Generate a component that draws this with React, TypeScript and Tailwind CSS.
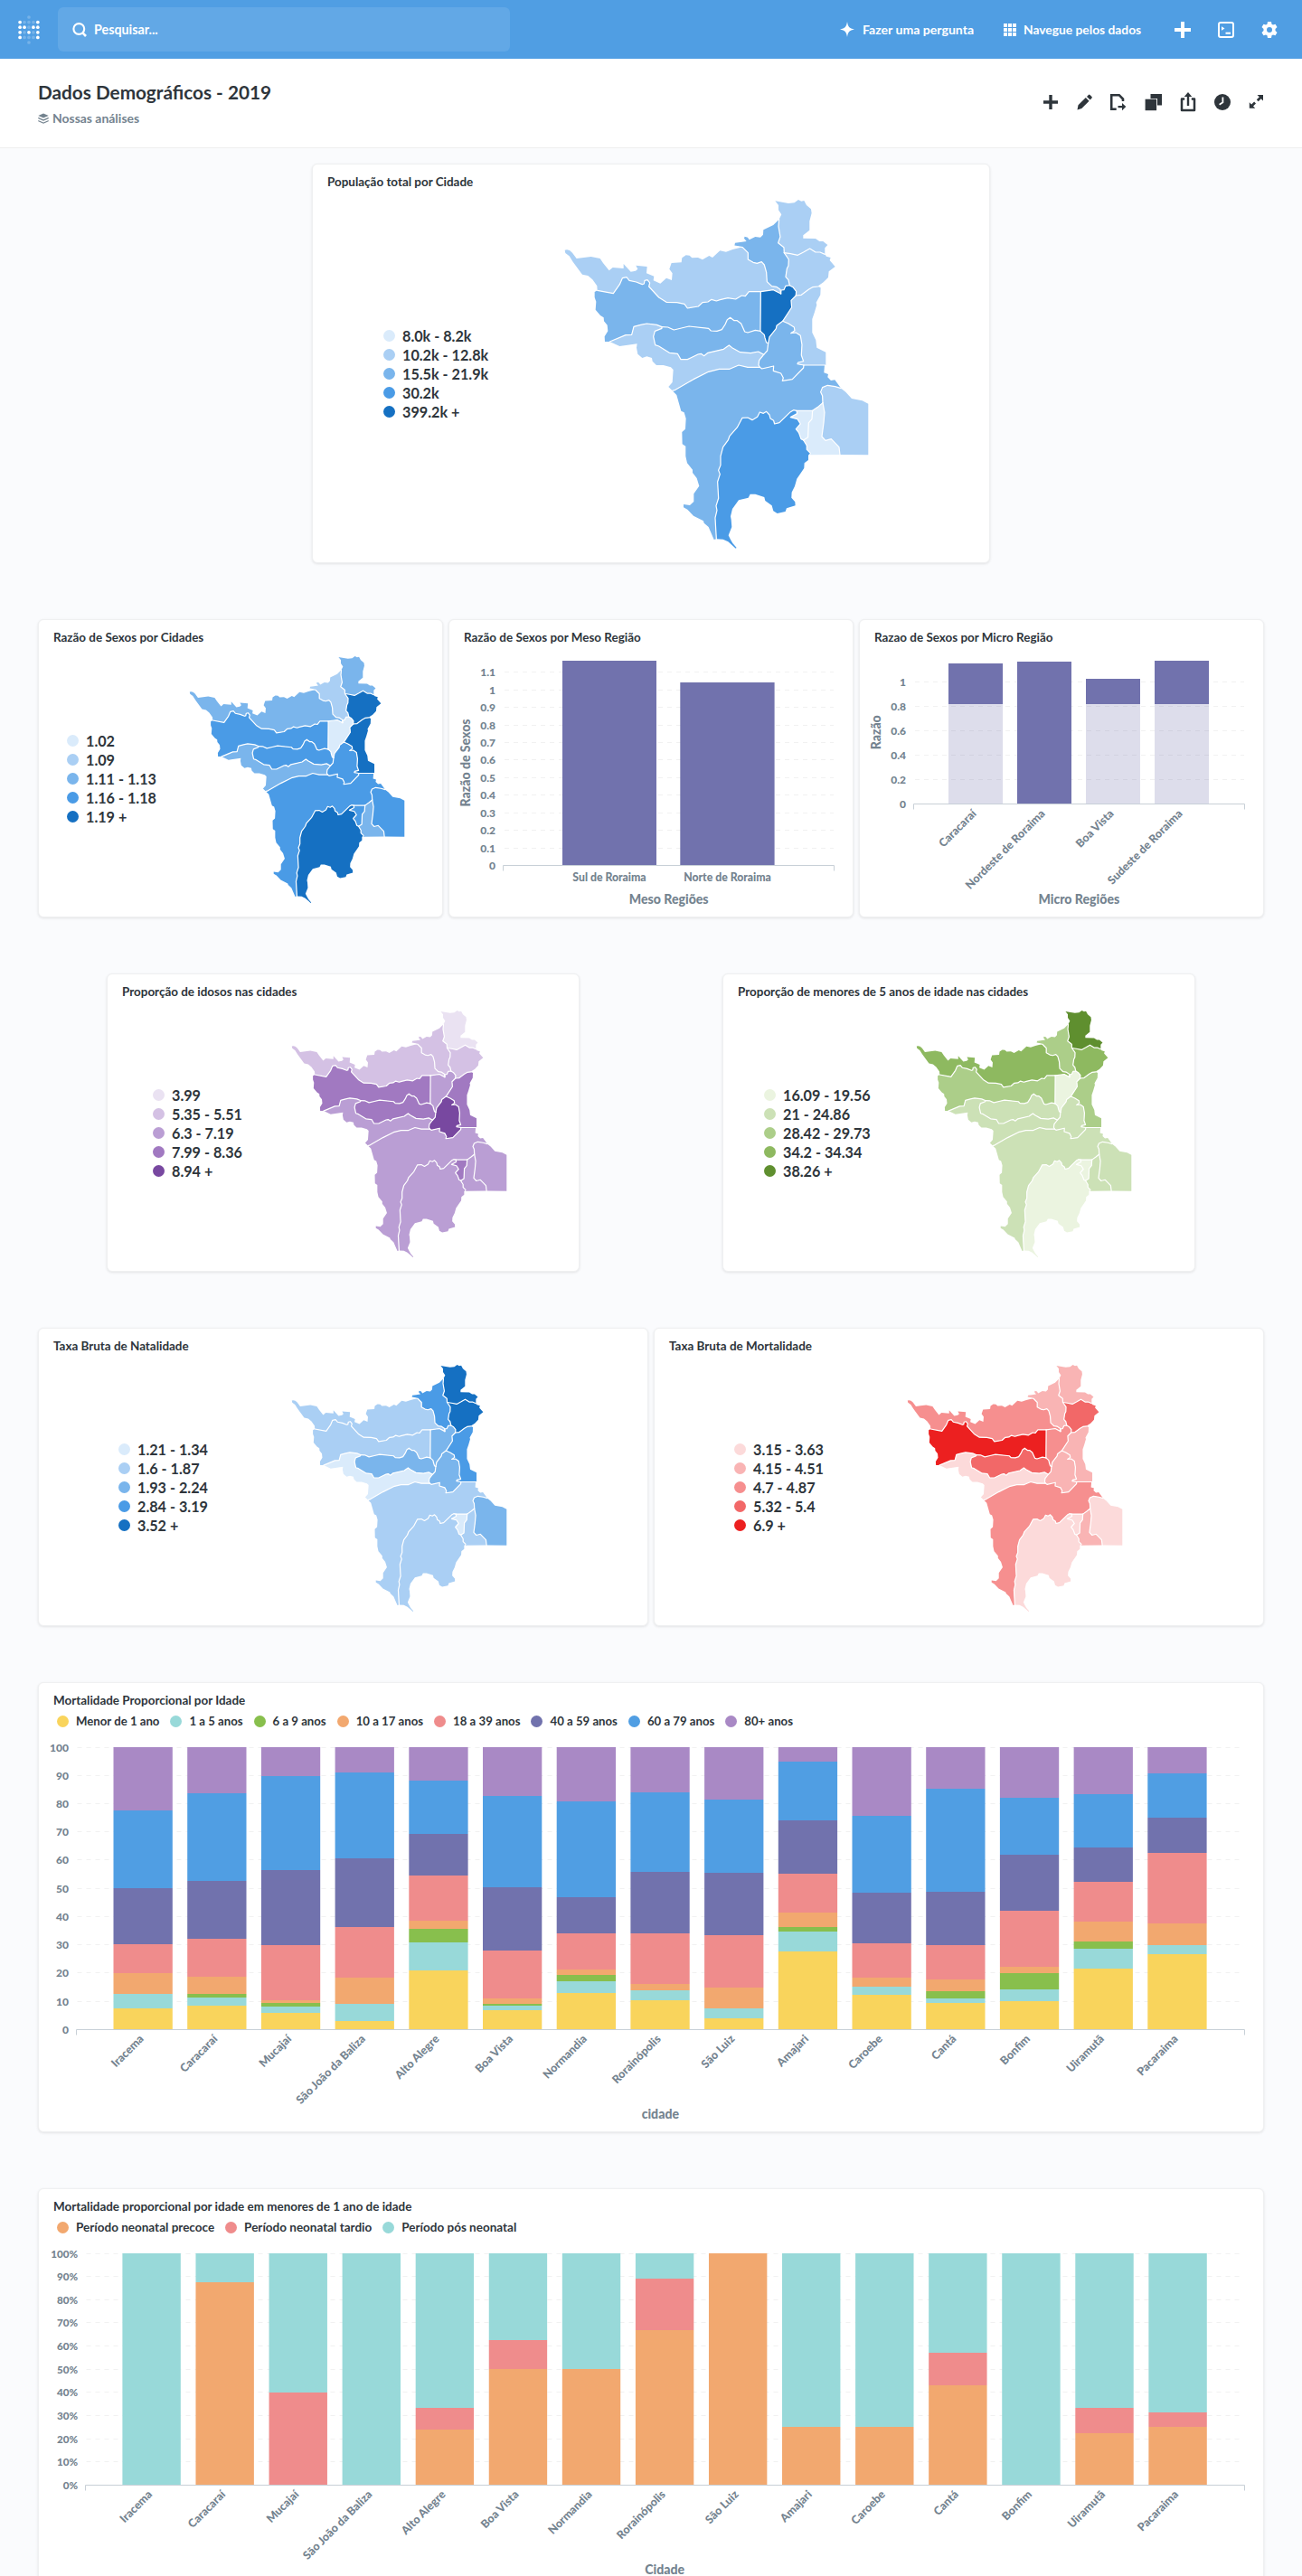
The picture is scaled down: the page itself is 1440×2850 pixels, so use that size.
import React from "react";

type Pt = string;

/* Shared municipal borders, listed once and reused by both neighbours. */
const B = {
  uirNor: "936,245 920,238 905,238 886,226 865,238 846,248 822,243 801,240",
  uirPac: "801,240 800,222 781,207 788,187 782,152 784,129",
  pacAma: "636,217 663,222 681,240 681,262 698,272 711,275 726,270 735,280 742,305 744,336 760,351 775,353 788,362 790,376",
  pacBv: "790,376 791,364 800,363 806,350 819,348",
  pacNor: "819,348 815,330 806,320 810,293 815,283 816,262 801,240",
  norBon: "913,352 895,354 882,362 858,380 840,382",
  norBv: "840,382 841,368 830,354 819,348",
  bonCar: "938,613 866,613",
  bonCan: "866,613 845,609 847,604 865,600 858,580 860,545 855,515 840,505 823,507 836,498 834,487 815,475 796,467",
  bonBv: "796,467 826,421 824,398 840,382",
  bvCan: "796,467 776,482 774,492 752,520 748,540",
  bvMuc: "748,540 742,538 737,522 735,512 722,500",
  bvAlt: "723,369 722,500",
  amaBv: "723,369 750,365 765,363 790,376",
  amaAlt: "723,369 684,369 672,384 660,382 640,394 614,390 588,396 576,400 560,395 548,403 530,405 516,418 480,424 470,410 445,405 410,404 385,388 352,352 355,340 347,330 338,332 336,343 330,345 310,337 287,332 278,321 264,324 255,345 234,375 181,365",
  altMuc: "722,500 705,497 680,505 670,502 658,475 645,465 635,465 622,455 612,462 605,478 594,495 578,500 558,499 550,491 485,484 460,490 435,496 415,487 395,486",
  altIra: "395,486 378,479 345,475 325,479 302,485 295,512 275,513 222,535",
  mucIra: "395,486 395,491 372,500 367,518 373,546 385,550 420,572 447,575 458,594 480,594 515,577 525,575 535,582 548,572 600,560 618,547 628,555 655,570 690,573 715,568 733,578",
  mucCan: "733,578 745,565 748,540",
  iraCan: "733,578 718,597 716,612 720,620",
  iraCar: "720,620 680,620 650,613 620,626 585,626 550,635 500,660 440,695 430,698",
  canCar: "720,620 727,625 766,616 765,632 790,640 798,655 795,665 828,660 865,622 866,613",
  carCbe: "990,690 970,684 945,680 928,687 922,702 928,715 929,738",
  carSjb: "929,738 915,750 895,764",
  carSlz: "895,764 842,764",
  carRor: "842,764 832,762 822,768 785,804 769,808 766,797 755,790 752,778 742,767 732,773 720,769 712,785 695,795 680,787 662,788 645,820 620,848 615,862 598,885 590,915 590,945 583,962 588,975 580,1000 583,1055 575,1080 578,1095 572,1120 576,1190",
  rorSlz: "842,764 844,774 822,786 845,792 855,808 840,825 850,838 857,858 865,862",
  rorSjb: "865,862 876,880 876,893 888,905",
  slzSjb: "895,764 893,792 882,805 880,852 865,862",
  sjbCbe: "929,738 935,770 932,805 926,850 938,863 957,858 983,885 986,910",
};

const BORDERS = Object.values(B);

const rev = (s: Pt) => s.split(" ").reverse().join(" ");
const ring = (...parts: Pt[]) => parts.join(" ");

const REGIONS: Record<string, string> = {
  uiramuta: ring("784,129 792,113 782,98 782,82 771,68 795,72 815,76 835,74 848,64 858,69 867,67 875,82 890,95 892,108 885,135 885,165 864,182 864,192 905,193 918,202 930,202 945,214 936,224", B.uirNor, B.uirPac),
  pacaraima: ring("784,129 765,148 732,164 731,180 722,189 705,187 685,197 680,189 670,186 668,192 676,202 655,205 638,207", B.pacAma, B.pacBv, B.pacNor, B.uirPac),
  normandia: ring(rev(B.uirNor), "941,252 955,256 952,265 970,286 949,302 947,322 931,338 916,348", B.norBon, B.norBv, B.pacNor),
  bonfim: ring(rev(B.norBon), "913,352 922,356 921,380 907,405 909,413 901,440 894,460 894,505 906,530 909,555 939,570 939,613", B.bonCan, B.bonBv),
  boavista: ring(B.amaBv, B.pacBv, rev(B.norBv), rev(B.bonBv), B.bvCan, B.bvMuc),
  amajari: ring("181,365 180,350 165,329 150,316 131,312 100,270 88,251 75,241 73,231 80,230 89,232 98,240 112,259 160,253 190,259 200,274 220,299 232,289 268,292 268,277 292,303 308,300 315,294 309,282 346,286 344,308 369,318 367,332 390,342 410,324 428,331 430,308 420,294 427,274 460,272 462,257 475,248 487,249 495,257 515,256 530,263 552,250 563,256 588,233 608,237 630,229 663,221", B.pacAma.replace("636,217 ", ""), rev(B.amaBv), B.amaAlt),
  altoalegre: ring(rev(B.amaAlt), B.altMuc, B.altIra, "206,535 205,518 216,500 214,480 203,467 202,455 191,448 175,429 177,402 172,388 172,370"),
  mucajai: ring(rev(B.altMuc), rev(B.bvMuc), rev(B.mucCan), rev(B.mucIra)),
  iracema: ring(rev(B.altIra), B.mucIra, B.iraCan, B.iraCar, "417,685 430,670 433,628 425,620 400,613 377,613 364,600 362,589 345,584 330,589 315,576 311,555 313,542 255,550"),
  canta: ring(rev(B.bvCan), rev(B.bonCan), rev(B.canCar), rev(B.iraCan), B.mucCan),
  caracarai: ring(rev(B.iraCar), B.canCar, "935,613 933,638 947,643 945,653 956,664 969,662", B.carCbe, B.carSjb, B.carSlz, B.carRor, "568,1192 550,1150 535,1137 533,1130 500,1113 480,1092 467,1085 467,1075 488,1078 501,1066 501,1040 519,1014 511,988 497,970 497,960 479,938 474,915 474,882 463,875 462,835 473,825 475,790 469,770 459,765 444,712"),
  rorainopolis: ring(B.carRor, "598,1191 615,1199 630,1212 640,1221 643,1219 630,1204 623,1192 616,1178 627,1150 625,1125 623,1115 629,1090 650,1061 682,1053 688,1041 705,1041 735,1051 738,1063 760,1079 765,1097 778,1105 805,1099 809,1088 838,1079 837,1067 825,1053 826,1035 836,1015 843,990 867,955 868,938 881,928 881,912", rev(B.rorSjb), rev(B.rorSlz)),
  saoluiz: ring(B.slzSjb, rev(B.rorSlz)),
  baliza: ring(B.sjbCbe, "888,911", rev(B.rorSjb), rev(B.slzSjb), rev(B.carSjb)),
  caroebe: ring(B.sjbCbe, "1080,911 1080,741 1060,731 1025,724 1005,702", B.carCbe),
};

const REGION_IDS = [
  "uiramuta", "pacaraima", "normandia", "bonfim", "boavista", "amajari", "altoalegre", "mucajai",
  "iracema", "canta", "caracarai", "rorainopolis", "saoluiz", "baliza", "caroebe",
];

const BLUES = ["#DAEBFB", "#AACFF4", "#7AB5EC", "#4A9BE6", "#1570C2"];
const PURPLES = ["#EAE2F2", "#D4C1E4", "#BA9ED4", "#A179C1", "#7848A0"];
const GREENS = ["#EBF4E0", "#CCE1B6", "#ACCE89", "#8EB960", "#5F8F2F"];
const REDS = ["#FCDADA", "#F9B4B4", "#F68F8F", "#F26868", "#EC2020"];

function RegionMap({ levels, palette, className }: { levels: number[]; palette: string[]; className: string }) {
  return (
    <svg viewBox="74 64 1006 1156" className={`shrink-0 overflow-visible ${className}`}>
      {REGION_IDS.map((id, i) => (
        <polygon key={id} points={REGIONS[id]} fill={palette[levels[i]]} />
      ))}
      {BORDERS.map((points) => (
        <polyline key={points} points={points} fill="none" stroke="#fff" strokeWidth="1.2" strokeLinejoin="round" strokeLinecap="round" vectorEffect="non-scaling-stroke" />
      ))}
    </svg>
  );
}

function Card({ title, className, children }: { title: string; className: string; children: React.ReactNode }) {
  return (
    <section className={`flex shrink-0 flex-col rounded-[6px] border border-[#eff0f1] bg-white shadow-[0_1px_3px_rgba(0,0,0,0.1)] ${className}`}>
      <h2 className="h-10 shrink-0 pt-[11px] pl-4 text-[13.45px] leading-4 font-bold text-[#2e353b]">{title}</h2>
      {children}
    </section>
  );
}

type MapCardProps = {
  title: string;
  card: string;
  legend: string;
  map: string;
  labels: string[];
  palette: string[];
  levels: number[];
};

function MapCard({ title, card, legend, map, labels, palette, levels }: MapCardProps) {
  return (
    <Card title={title} className={card}>
      <div className="flex items-center">
        <ul className={`shrink-0 pb-0.5 ${legend}`}>
          {labels.map((l, i) => (
            <li key={l} className="flex h-[21px] items-center gap-2 text-[16.2px] leading-[21px] font-bold whitespace-nowrap text-[#2e353b]">
              <svg className="size-[13px] shrink-0" viewBox="0 0 13 13"><circle cx="6.5" cy="6.5" r="6.5" fill={palette[i]} /></svg>
              {l}
            </li>
          ))}
        </ul>
        <RegionMap levels={levels} palette={palette} className={map} />
      </div>
    </Card>
  );
}

const SMALL_MAP = "h-[272.7px] w-[237.3px]";

/* ---------- charts ---------- */

const AXIS = "#74838f";

function YTicks({ ticks, x, x1, x2 }: { ticks: [string, number][]; x: number; x1: number; x2: number }) {
  return (
    <>
      {ticks.map(([t, y]) => (
        <g key={t}>
          {Number.parseFloat(t) !== 0 && <line x1={x1 + 1} x2={x2} y1={y} y2={y} stroke="#f1f1f1" strokeDasharray="5 5" />}
          <text x={x} y={y + 4.5} textAnchor="end" fontSize={t.endsWith("%") ? "11.6" : "12"} fontWeight="900" fill={AXIS}>{t}</text>
        </g>
      ))}
    </>
  );
}

function XAxis({ x1, x2, y }: { x1: number; x2: number; y: number }) {
  return <path d={`M${x1} ${y + 6}V${y}H${x2}V${y + 6}`} fill="none" stroke="#c8d0d7" />;
}

function SlantLabel({ x, y, children }: { x: number; y: number; children: string }) {
  return (
    <text transform={`translate(${x} ${y}) rotate(-45)`} textAnchor="end" fontSize="12.5" fontWeight="900" fill={AXIS}>{children}</text>
  );
}

function AxisTitle({ x, y, vertical, children }: { x: number; y: number; vertical?: boolean; children: string }) {
  return (
    <text transform={`translate(${x} ${y})${vertical ? " rotate(-90)" : ""}`} textAnchor="middle" fontSize="14.1" fontWeight="900" fill={AXIS}>{children}</text>
  );
}

function MesoChart() {
  const ticks = Array.from({ length: 12 }, (_, i) => [String(i / 10), Math.round(957 - i * 19.42) + 0.5] as [string, number]);
  return (
    <svg viewBox="497 726 446 288" className="h-[288px] w-[446px]">
      <YTicks ticks={ticks} x={548} x1={557} x2={922} />
      <rect x="622" y="731" width="104" height="226.5" fill="#7172AD" />
      <rect x="752.3" y="755" width="104.3" height="202.5" fill="#7172AD" />
      <XAxis x1={556.5} x2={922.5} y={957.5} />
      <text x="674" y="975" textAnchor="middle" fontSize="12.25" fontWeight="900" fill={AXIS}>Sul de Roraima</text>
      <text x="804.5" y="975" textAnchor="middle" fontSize="12.25" fontWeight="900" fill={AXIS}>Norte de Roraima</text>
      <AxisTitle x={739.7} y={1000}>Meso Regiões</AxisTitle>
      <AxisTitle x={520} y={844} vertical>Razão de Sexos</AxisTitle>
    </svg>
  );
}

function MicroChart() {
  const ticks = [0, 0.2, 0.4, 0.6, 0.8, 1].map((v, i) => [String(v), 889.5 - i * 27] as [string, number]);
  const bars: [string, number, boolean][] = [
    ["Caracaraí", 734, true], ["Nordeste de Roraima", 732, false], ["Boa Vista", 751, true], ["Sudeste de Roraima", 731, true],
  ];
  return (
    <svg viewBox="951 726 446 288" className="h-[288px] w-[446px]">
      <YTicks ticks={ticks} x={1002} x1={1011} x2={1376} />
      {bars.map(([name, top, split], i) => {
        const x = 1049 + i * 76;
        return (
          <g key={name}>
            <rect x={x} y={top} width="60" height={(split ? 779 : 889.5) - top} fill="#7172AD" />
            {split && <rect x={x} y="779" width="60" height="110.5" fill="#7172AD" fillOpacity="0.24" />}
            <SlantLabel x={x + 31.5} y={901}>{name}</SlantLabel>
          </g>
        );
      })}
      <XAxis x1={1010.5} x2={1376.5} y={889.5} />
      <AxisTitle x={1193.3} y={1000}>Micro Regiões</AxisTitle>
      <AxisTitle x={974} y={810.3} vertical>Razão</AxisTitle>
    </svg>
  );
}

const CITIES = ["Iracema", "Caracaraí", "Mucajaí", "São João da Baliza", "Alto Alegre", "Boa Vista", "Normandia", "Rorainópolis", "São Luiz", "Amajari", "Caroebe", "Cantá", "Bonfim", "Uiramutã", "Pacaraima"];

type Series = { name: string; color: string };

const AGES: Series[] = [
  { name: "Menor de 1 ano", color: "#F9D45C" },
  { name: "1 a 5 anos", color: "#98D9D9" },
  { name: "6 a 9 anos", color: "#88BF4D" },
  { name: "10 a 17 anos", color: "#F2A86F" },
  { name: "18 a 39 anos", color: "#EF8C8C" },
  { name: "40 a 59 anos", color: "#7172AD" },
  { name: "60 a 79 anos", color: "#509EE3" },
  { name: "80+ anos", color: "#A989C5" },
];

/* Cumulative share reached at the top of every age group, per city. */
const AGE_STACKS = [
  [7.5, 12.6, 12.6, 20, 30.2, 50.1, 77.5, 100],
  [8.4, 11.3, 12.6, 18.7, 32.1, 52.6, 83.7, 100],
  [5.9, 8.1, 9.4, 10.4, 29.9, 56.5, 89.8, 100],
  [3, 9.1, 9.1, 18.4, 36.3, 60.7, 91.1, 100],
  [20.9, 30.9, 35.7, 38.5, 54.6, 69.3, 88.2, 100],
  [6.8, 8.4, 9.1, 11, 28, 50.4, 82.8, 100],
  [12.9, 17.1, 19.3, 21.2, 34.1, 46.8, 80.7, 100],
  [10.4, 13.9, 13.9, 16.1, 34.1, 55.8, 84, 100],
  [4, 7.5, 7.5, 14.8, 33.4, 55.5, 81.5, 100],
  [27.7, 34.7, 36.3, 41.4, 55.2, 74.1, 94.9, 100],
  [12.3, 15.2, 15.2, 18.4, 30.5, 48.4, 75.6, 100],
  [9.4, 11, 13.6, 17.7, 29.9, 48.7, 85.3, 100],
  [10, 14.2, 20, 22.2, 42.1, 61.9, 82.1, 100],
  [21.6, 28.6, 31.2, 38.2, 52.3, 64.5, 83.4, 100],
  [26.7, 29.9, 29.9, 37.6, 62.6, 75.1, 90.8, 100],
];

const PERIODS: Series[] = [
  { name: "Período neonatal precoce", color: "#F2A86F" },
  { name: "Período neonatal tardio", color: "#EF8C8C" },
  { name: "Período pós neonatal", color: "#98D9D9" },
];

const PERIOD_STACKS = [
  [0, 0, 100], [87.6, 87.6, 100], [0, 40, 100], [0, 0, 100], [23.9, 33.3, 100],
  [50, 62.6, 100], [50, 50, 100], [66.9, 89.1, 100], [100, 100, 100], [25, 25, 100],
  [25, 25, 100], [43.1, 57.1, 100], [0, 0, 100], [22.4, 33.3, 100], [25.1, 31.4, 100],
];

function Legend({ series, className }: { series: Series[]; className: string }) {
  return (
    <ul className="flex h-[13px] items-center gap-3 pl-5">
      {series.map((s) => (
        <li key={s.name} className={`flex items-center gap-2 leading-[13px] font-bold whitespace-nowrap text-[#2e353b] ${className}`}>
          <svg className="size-[13px] shrink-0" viewBox="0 0 13 13"><circle cx="6.5" cy="6.5" r="6.5" fill={s.color} /></svg>
          {s.name}
        </li>
      ))}
    </ul>
  );
}

type StackProps = {
  series: Series[];
  stacks: number[][];
  top: number;
  bottom: number;
  axisX: number;
  left: number;
  pitch: number;
  width: number;
  unit: string;
  title: string;
  titleX: number;
  titleY: number;
  originY: number;
  height: number;
};

function StackChart(p: StackProps) {
  const yOf = (v: number) => p.bottom - ((p.bottom - p.top) * v) / 100;
  const ticks = Array.from({ length: 11 }, (_, i) => [`${i * 10}${p.unit}`, Math.floor(yOf(i * 10)) + 0.5] as [string, number]);
  return (
    <svg viewBox={`43 ${p.originY} 1354 ${p.height}`} width="1354" height={p.height} className="block shrink-0">
      <YTicks ticks={ticks} x={p.axisX - 8.5} x1={p.axisX} x2={1372} />
      {p.stacks.map((stack, i) => {
        const x = p.left + i * p.pitch;
        return (
          <g key={CITIES[i]}>
            {stack.map((v, k) => {
              const from = k ? stack[k - 1] : 0;
              if (v <= from) return null;
              const y = Math.round(yOf(v));
              return <rect key={k} x={x} y={y} width={p.width} height={Math.round(yOf(from)) - y} fill={p.series[k].color} />;
            })}
            <SlantLabel x={x + p.width / 2 + 1.5} y={p.bottom + 11.2}>{CITIES[i]}</SlantLabel>
          </g>
        );
      })}
      <XAxis x1={p.axisX} x2={1376.5} y={Math.floor(p.bottom) + 0.5} />
      <AxisTitle x={p.titleX} y={p.titleY}>{p.title}</AxisTitle>
    </svg>
  );
}

/* ---------- top bar ---------- */

const LOGO = ["..f..", "WfffW", "WWfWW", "WfWfW", "WfffW", "..f.."];

function Logo() {
  return (
    <svg viewBox="0 0 24 32" className="h-8 w-6 shrink-0">
      {LOGO.flatMap((row, r) =>
        row.split("").map((c, k) =>
          c === "." ? null : <circle key={`${r}-${k}`} cx={2.1 + k * 4.93} cy={2 + r * 5.6} r="1.85" fill="#fff" fillOpacity={c === "W" ? 1 : 0.22} />,
        ),
      )}
    </svg>
  );
}

function NavBar() {
  return (
    <header className="flex h-[65px] shrink-0 items-center bg-[#509EE3] pl-5 text-white">
      <Logo />
      <div className="ml-5 flex h-[49px] w-[500px] items-center rounded-[6px] bg-[#62a8e6]">
        <svg viewBox="0 0 16 16" className="ml-4 size-4" fill="none" stroke="#fff">
          <circle cx="7.3" cy="7" r="5.9" strokeWidth="2.1" />
          <path d="M11.2 11.2 15 15" strokeWidth="2.6" />
        </svg>
        <span className="ml-2 text-[14.3px] leading-5 font-bold">Pesquisar...</span>
      </div>
      <nav className="ml-[365px] flex items-center leading-5 font-bold whitespace-nowrap">
        <svg viewBox="0 0 16 17" className="h-[17px] w-4" fill="#fff">
          <path d="M8 0c.8 5.300 2.300 7.600 8 8.500-5.700.9-7.200 3.200-8 8.500-.8-5.300-2.300-7.600-8-8.500C5.700 7.600 7.200 5.300 8 0z" />
        </svg>
        <span className="ml-[9px] w-[125px] text-[14.1px]">Fazer uma pergunta</span>
        <svg viewBox="0 0 14 14" className="ml-[31px] size-[14px]" fill="#fff">
          {[0, 5, 10].map((y) => [0, 5, 10].map((x) => <rect key={`${x}${y}`} x={x} y={y} width="4" height="4" />))}
        </svg>
        <span className="ml-2 w-[131px] text-[13.8px]">Navegue pelos dados</span>
        <svg viewBox="0 0 18 18" className="ml-9 size-[18px]"><path d="M9 0v18M0 9h18" stroke="#fff" strokeWidth="4" /></svg>
        <svg viewBox="0 0 18 18" className="ml-[30px] size-[18px]" fill="none" stroke="#fff">
          <rect x="1" y="1" width="16" height="16" rx="2" strokeWidth="2" />
          <path d="M4 5.200 7.500 7.500 4 9.800z" fill="#fff" stroke="none" />
          <path d="M8.500 12.700H14" strokeWidth="2" />
        </svg>
        <svg viewBox="0 0 18 18" className="ml-[30px] size-[18px]">
          <path
            fill="#fff"
            fillRule="evenodd"
            d="M7 0h4l.5 2.700 1.500.9 2.500-.9 2 3.400-2 1.800v2.200l2 1.800-2 3.400-2.500-.9-1.500.9L11 18H7l-.5-2.700-1.500-.9-2.500.9-2-3.400 2-1.800V7.900l-2-1.800 2-3.400 2.500.9 1.500-.9zM9 6a3 3 0 1 0 0 6 3 3 0 0 0 0-6z"
          />
        </svg>
      </nav>
    </header>
  );
}

function Tool({ children }: { children: React.ReactNode }) {
  return (
    <button type="button" className="flex w-[38px] justify-center">
      <svg viewBox="0 0 24 24" className="size-6 shrink-0" fill="#2e353b">{children}</svg>
    </button>
  );
}

function TitleBar() {
  return (
    <div className="flex h-[99px] shrink-0 items-center justify-between border-b border-[#eeeeee] bg-white pr-[31px] pl-[42px]">
      <div className="pt-px">
        <h1 className="text-[20.75px] leading-7 font-bold text-[#2e353b]">Dados Demográficos - 2019</h1>
        <p className="mt-[5px] flex items-center gap-1 text-[13.95px] leading-5 font-bold text-[#74838f]">
          <svg viewBox="0 0 12 12" className="size-3" fill="#74838f">
            <path d="M6 .5 11.700 3 6 5.500.3 3z" />
            <path d="M.3 4.800 6 7.300l5.700-2.500v1.500L6 8.800.3 6.300z" />
            <path d="M.3 8 6 10.500 11.700 8v1.300L6 11.800.3 9.300z" />
          </svg>
          Nossas análises
        </p>
      </div>
      <div className="flex pb-0.5">
        <Tool><path d="M10.300 4h3.400v6.300H20v3.400h-6.300V20h-3.400v-6.300H4v-3.400h6.300z" /></Tool>
        <Tool><path d="m3.500 20.500 1-5.200 8.300-8.300 3.800 3.800-8.300 8.300zM14 5.900l1.900-2a1.100 1.100 0 0 1 1.600 0l2 2a1.100 1.100 0 0 1 0 1.600l-1.800 2z" /></Tool>
        <Tool>
          <path d="M16 11V8.500L11.800 4.200H3.200v15.600h5.500" fill="none" stroke="#2e353b" strokeWidth="2.600" />
          <path d="M10.500 15.900H15V13l4.300 4.100-4.300 4.100v-2.900h-4.500z" />
        </Tool>
        <Tool>
          <path d="M8.500 3H21v12.500H8.500z" />
          <path d="M2 8h14v14H2z" fill="#fff" />
          <path d="M2.600 8.700h12.500v12.500H2.600z" />
        </Tool>
        <Tool>
          <path d="M8.200 8.600H5V21h14V8.600h-3.200" fill="none" stroke="#2e353b" strokeWidth="2.500" strokeLinejoin="round" />
          <path d="M12 1 16.300 6h-3.100v10h-2.400V6H7.700z" />
        </Tool>
        <Tool>
          <circle cx="12" cy="12" r="9" />
          <path d="M12.400 6.500v5.800l-3.800 2.500" fill="none" stroke="#fff" strokeWidth="1.800" />
        </Tool>
        <Tool>
          <path d="M12.500 4H19v6.500l-2.300-2.300-3 3-1.900-1.900 3-3zM3.800 18.800v-6.500L6.100 14.600l3-3 1.900 1.900-3 3 2.300 2.300z" />
        </Tool>
      </div>
    </div>
  );
}

export default function App() {
  return (
    <div className="flex h-[2850px] w-[1440px] flex-col overflow-hidden bg-[#fafbfd] font-['Lato',sans-serif]">
      <NavBar />
      <TitleBar />
      <main className="flex flex-col gap-[62px] px-[42px] pt-[17px]">
        <div className="flex justify-center">
          <MapCard
            title="População total por Cidade"
            card="h-[442px] w-[750px]"
            legend="ml-[78px] w-[200.7px]"
            map="-mt-[1px] h-[385.3px] w-[335.3px]"
            labels={["8.0k - 8.2k", "10.2k - 12.8k", "15.5k - 21.9k", "30.2k", "399.2k +"]}
            palette={BLUES}
            levels={[1, 2, 1, 1, 4, 1, 2, 2, 1, 2, 2, 3, 0, 0, 1]}
          />
        </div>
        <div className="flex gap-1.5">
          <MapCard
            title="Razão de Sexos por Cidades"
            card="h-[330px] w-[448px]"
            legend="ml-[31px] w-[136.3px]"
            map={SMALL_MAP}
            labels={["1.02", "1.09", "1.11 - 1.13", "1.16 - 1.18", "1.19 +"]}
            palette={BLUES}
            levels={[2, 1, 4, 4, 0, 2, 3, 3, 2, 3, 3, 4, 3, 2, 3]}
          />
          <Card title="Razão de Sexos por Meso Região" className="h-[330px] w-[448px]"><MesoChart /></Card>
          <Card title="Razao de Sexos por Micro Região" className="h-[330px] w-[448px]"><MicroChart /></Card>
        </div>
        <div className="flex justify-between px-[76px]">
          <MapCard
            title="Proporção de idosos nas cidades"
            card="h-[330px] w-[523px]"
            legend="ml-[50px] w-[154px]"
            map={SMALL_MAP}
            labels={["3.99", "5.35 - 5.51", "6.3 - 7.19", "7.99 - 8.36", "8.94 +"]}
            palette={PURPLES}
            levels={[0, 1, 1, 3, 2, 1, 3, 3, 2, 4, 2, 2, 3, 2, 2]}
          />
          <MapCard
            title="Proporção de menores de 5 anos de idade nas cidades"
            card="h-[330px] w-[523px]"
            legend="ml-[45px] w-[169px]"
            map={SMALL_MAP}
            labels={["16.09 - 19.56", "21 - 24.86", "28.42 - 29.73", "34.2 - 34.34", "38.26 +"]}
            palette={GREENS}
            levels={[4, 2, 3, 2, 0, 3, 2, 1, 1, 1, 1, 0, 0, 1, 1]}
          />
        </div>
        <div className="flex gap-1.5">
          <MapCard
            title="Taxa Bruta de Natalidade"
            card="h-[330px] w-[675px]"
            legend="ml-[88px] w-[192px]"
            map={SMALL_MAP}
            labels={["1.21 - 1.34", "1.6 - 1.87", "1.93 - 2.24", "2.84 - 3.19", "3.52 +"]}
            palette={BLUES}
            levels={[4, 3, 4, 3, 2, 1, 1, 2, 0, 2, 1, 1, 0, 1, 2]}
          />
          <MapCard
            title="Taxa Bruta de Mortalidade"
            card="h-[330px] w-[675px]"
            legend="ml-[88px] w-[192px]"
            map={SMALL_MAP}
            labels={["3.15 - 3.63", "4.15 - 4.51", "4.7 - 4.87", "5.32 - 5.4", "6.9 +"]}
            palette={REDS}
            levels={[1, 1, 3, 1, 2, 2, 4, 3, 0, 1, 2, 0, 0, 1, 0]}
          />
        </div>
        <Card title="Mortalidade Proporcional por Idade" className="h-[498px] w-[1356px]">
          <div className="-mt-[4px] flex flex-col">
            <Legend series={AGES} className="text-[13.2px]" />
            <StackChart series={AGES} stacks={AGE_STACKS} top={1933} bottom={2245.3} axisX={84.5} left={125.5} pitch={81.7} width={65.3} unit="" title="cidade" titleX={730.3} titleY={2344} originY={1911} height={446} />
          </div>
        </Card>
        <Card title="Mortalidade proporcional por idade em menores de 1 ano de idade" className="h-[498px] w-[1356px]">
          <div className="-mt-[4px] flex flex-col">
            <Legend series={PERIODS} className="text-[13.5px]" />
            <StackChart series={PERIODS} stacks={PERIOD_STACKS} top={2493} bottom={2749.3} axisX={94.5} left={135.4} pitch={81.07} width={64.4} unit="%" title="Cidade" titleX={735.2} titleY={2848} originY={2471} height={446} />
          </div>
        </Card>
      </main>
    </div>
  );
}
